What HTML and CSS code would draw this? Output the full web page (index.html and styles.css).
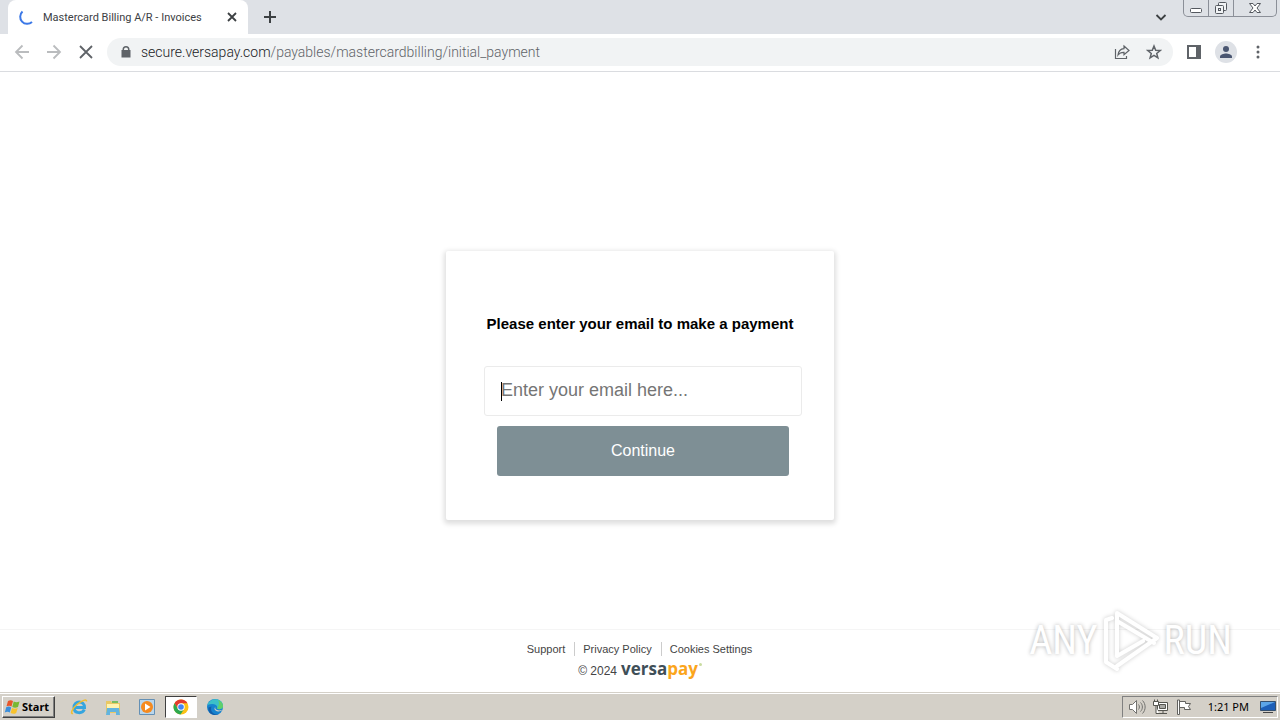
FILE: index.html
```html
<!DOCTYPE html>
<html lang="en">
<head>
    <meta charset="UTF-8">
    <meta name="viewport" content="width=device-width, initial-scale=1.0">
    <title>Mastercard Billing A/R - Invoices</title>
    <link rel="stylesheet" href="styles.css">
</head>
<body>
    <!-- Tab strip -->
    <header class="tab-strip">
        <div class="tab">
            <svg class="spinner" width="16" height="16" viewBox="0 0 16 16" fill="none" stroke="#3b78e7" stroke-width="2">
                <path d="M3.500 2.600A7 7 0 0 0 13 13"/>
            </svg>
            <span class="tab-title">Mastercard Billing A/R - Invoices</span>
            <button class="icon-button tab-close" aria-label="Close tab">
                <svg width="10" height="10" viewBox="0 0 10 10" fill="none" stroke="#3c4043" stroke-width="1.800">
                    <path d="M1 1l8 8M9 1L1 9"/>
                </svg>
            </button>
        </div>
        <button class="icon-button new-tab" aria-label="New tab">
            <svg width="12" height="12" viewBox="0 0 12 12" stroke="#3c4043" stroke-width="2">
                <path d="M6 0v12M0 6h12"/>
            </svg>
        </button>
        <button class="icon-button tab-search" aria-label="Search tabs">
            <svg width="12" height="12" viewBox="0 0 12 12" fill="none" stroke="#3c4043" stroke-width="1.800">
                <path d="M1.500 4L6 8.500 10.500 4"/>
            </svg>
        </button>
        <div class="window-controls">
            <button class="window-button" aria-label="Minimize">
                <svg width="14" height="12" viewBox="0 0 14 12" fill="#fff" stroke="#54585f">
                    <rect x="1.500" y="6.500" width="11" height="4" rx="1"/>
                </svg>
            </button>
            <button class="window-button" aria-label="Restore">
                <svg width="14" height="14" viewBox="0 0 14 14" fill="#f1f3f5" stroke="#54585f">
                    <rect x="4.500" y="1.500" width="8" height="8" rx="1"/>
                    <rect x="1.500" y="4.500" width="8" height="8" rx="1"/>
                    <rect x="4.500" y="7.500" width="2" height="2"/>
                </svg>
            </button>
            <button class="window-button window-close" aria-label="Close">
                <svg width="14" height="12" viewBox="0 0 14 12" fill="#fff" stroke="#54585f">
                    <path d="M1.500 1.500h3.500l2 2.500 2-2.500h3.500L9 6l3.500 4.500H9L7 8l-2 2.500H1.500L5 6z"/>
                </svg>
            </button>
        </div>
    </header>

    <!-- Toolbar -->
    <nav class="toolbar">
        <button class="icon-button" aria-label="Back">
            <svg width="16" height="16" viewBox="0 0 16 16" fill="none" stroke="#babcbe" stroke-width="1.800">
                <path d="M15 8H2M8.500 1.500L2 8l6.500 6.500"/>
            </svg>
        </button>
        <button class="icon-button" aria-label="Forward">
            <svg width="16" height="16" viewBox="0 0 16 16" fill="none" stroke="#babcbe" stroke-width="1.800">
                <path d="M1 8h13M7.500 1.500L14 8l-6.500 6.500"/>
            </svg>
        </button>
        <button class="icon-button" aria-label="Stop loading">
            <svg width="16" height="16" viewBox="0 0 16 16" fill="none" stroke="#5f6368" stroke-width="1.800">
                <path d="M2 2l12 12M14 2L2 14"/>
            </svg>
        </button>
        <div class="address-bar">
            <svg width="12" height="14" viewBox="0 0 12 14" fill="#5f6368">
                <path d="M9.500 5V4.500a3.500 3.500 0 0 0-7 0V5H1.500v7.500h9V5zM4 5V4.500a2 2 0 0 1 4 0V5z"/>
            </svg>
            <span class="url"><span class="host">secure.versapay.com</span>/payables/mastercardbilling/initial_payment</span>
            <button class="icon-button" aria-label="Share">
                <svg width="16" height="16" viewBox="0 0 16 16" fill="none" stroke="#5f6368" stroke-width="1.200">
                    <path d="M1.500 5v9.500h11V12M10 2l5 4.500-5 4.300V8.300C7.500 8.200 5.500 9 4 11c.4-3.500 2.500-6 6-6.300z"/>
                </svg>
            </button>
            <button class="icon-button" aria-label="Bookmark this tab">
                <svg width="16" height="16" viewBox="0 0 16 16" fill="none" stroke="#5f6368" stroke-width="1.500">
                    <path d="M8 2l1.700 4.200 4.500.3-3.500 2.900 1.200 4.400L8 11.400l-3.900 2.400 1.200-4.400-3.500-2.900 4.500-.3z"/>
                </svg>
            </button>
        </div>
        <button class="icon-button" aria-label="Side panel">
            <svg width="14" height="14" viewBox="0 0 14 14">
                <path fill="#5f6368" d="M0 0h14v14H0z"/>
                <path fill="#fff" d="M2 2h7v10H2z"/>
            </svg>
        </button>
        <button class="icon-button" aria-label="Profile">
            <svg width="22" height="22" viewBox="0 0 22 22">
                <circle cx="11" cy="11" r="11" fill="#dee1e6"/>
                <circle cx="11" cy="8" r="3" fill="#4a5671"/>
                <path fill="#4a5671" d="M5 17v-1.500c0-2 4-3 6-3s6 1 6 3V17z"/>
            </svg>
        </button>
        <button class="icon-button" aria-label="Menu">
            <svg width="16" height="16" viewBox="0 0 16 16" fill="#5f6368">
                <circle cx="8" cy="3" r="1.500"/>
                <circle cx="8" cy="8" r="1.500"/>
                <circle cx="8" cy="13" r="1.500"/>
            </svg>
        </button>
    </nav>

    <!-- Payment page -->
    <div class="page">
        <main class="content">
            <form class="card">
                <label class="card-title" for="email">Please enter your email to make a payment</label>
                <div class="email-field">
                    <input class="email-input" id="email" type="email" placeholder="Enter your email here..." autofocus>
                </div>
                <button class="continue-button" type="button">Continue</button>
            </form>
        </main>
        <footer class="footer">
            <div class="footer-links">
                <a href="#support">Support</a>
                <a href="#privacy">Privacy Policy</a>
                <a href="#cookies">Cookies Settings</a>
            </div>
            <div class="copyright">
                <span>© 2024</span>
                <span class="brand">versa<span class="brand-pay">pay</span></span>
                <svg class="brand-mark" width="3" height="3" viewBox="0 0 3 3">
                    <circle cx="1.500" cy="1.500" r="1.500" fill="#c8dca0"/>
                </svg>
            </div>
        </footer>
        <div class="watermark">
            <span>ANY</span>
            <svg width="58" height="64" viewBox="0 0 58 64" fill="none" stroke="#fff" stroke-width="4" stroke-linejoin="round" stroke-linecap="round">
                <path d="M10 9L4 11v42l11 7"/>
                <path d="M15 47V4l40 25-40 28M15 12l37 22M15 47l26-15"/>
            </svg>
            <span>RUN</span>
        </div>
    </div>

    <!-- Taskbar -->
    <footer class="taskbar">
        <button class="start-button">
            <svg width="17" height="16" viewBox="0 0 17 16">
                <path fill="#e8562a" d="M4 2c2-1.200 3.500-1 5 0L7.500 7.500C6 6.500 4.500 6.500 2.500 7.300z"/>
                <path fill="#78b833" d="M9.700 2.500c2 1 3.500 1 5.800 0L14 8c-2 1-3.800 1-5.700 0z"/>
                <path fill="#3b8edb" d="M2.200 8.200c2-1 3.500-.8 5 .2l-1.400 5c-1.500-1-3.300-1-5 0z"/>
                <path fill="#f8c22b" d="M8 9c2 1 3.700 1 5.700 0l-1.500 5c-2 1.200-3.700 1-5.600 0z"/>
            </svg>
            Start
        </button>
        <div class="quick-launch">
            <button class="task-button" aria-label="Internet Explorer">
                <svg width="18" height="18" viewBox="0 0 18 18" fill="none">
                    <path stroke="#35a5df" stroke-width="3" d="M4 9.500h10.500C14.500 2 4 2 4 9.500c0 6.500 8.500 6.500 10.300 2"/>
                    <path stroke="#f0bd2f" stroke-width="1.500" d="M3 15.500c-3 1-1-5 4-9s10-6 9.500-3"/>
                </svg>
            </button>
            <button class="task-button" aria-label="Explorer">
                <svg width="18" height="18" viewBox="0 0 18 18">
                    <path fill="#e9c864" d="M2 3h5l1 2h8v10H2z"/>
                    <path fill="#fff3b0" d="M3 6h12v6H3z"/>
                    <path fill="#79bd62" d="M8 3h6v2H8z"/>
                    <path fill="#62b4df" d="M3 10h12l1 7h-4v-3H6v3H2z"/>
                </svg>
            </button>
            <button class="task-button" aria-label="Media Player">
                <svg width="18" height="18" viewBox="0 0 18 18">
                    <path fill="#b9d6ec" stroke="#6490b5" d="M1.500 1.500h15v15h-15z"/>
                    <circle cx="9" cy="9" r="6" fill="#f58a1f"/>
                    <path fill="#fff" d="M7 5.500v7L12.500 9z"/>
                </svg>
            </button>
            <button class="task-button active" aria-label="Chrome">
                <svg width="16" height="16" viewBox="0 0 16 16">
                    <circle cx="8" cy="8" r="7.500" fill="#fbc116"/>
                    <path fill="#e33b2e" d="M1.500 4.200a7.500 7.500 0 0 1 13 0H8L5 10z"/>
                    <path fill="#2da94f" d="M1.500 4.200L5 10l5.500 1-3 4.500A7.500 7.500 0 0 1 1.500 4.200z"/>
                    <circle cx="8" cy="8" r="3.700" fill="#fff"/>
                    <circle cx="8" cy="8" r="2.800" fill="#4285f4"/>
                </svg>
            </button>
            <button class="task-button" aria-label="Edge">
                <svg width="18" height="18" viewBox="0 0 18 18">
                    <circle cx="9" cy="9" r="8" fill="#1683cf"/>
                    <path fill="#3cc0c8" d="M1.500 7C4-1 17-.5 17 8c0 3-4 4-6 2.500 1.500-4-4-6-9.500-3.500z"/>
                    <path fill="#5fcf6c" d="M12 2c4 1.500 5.500 5 5 7-.8 2-4 2.800-6 1.500 1.500-2 3-5 1-8.500z"/>
                    <path fill="#135da8" d="M5.500 8.500c-2 5 3 9.500 8 7.300-5 3-12 .2-11-6.300z"/>
                    <path fill="#d4d0c8" d="M9.500 8.500c-1.500 3 2.500 5 6.700 3.300-1.500 2.400-8 2.300-7.700-1.500z"/>
                </svg>
            </button>
        </div>
        <div class="tray">
            <svg width="18" height="16" viewBox="0 0 18 16" fill="none" stroke="#72726f">
                <path fill="#fff" d="M1.500 5.500h3l4-4v13l-4-4h-3z"/>
                <path d="M10.500 5.500c1.200 1.500 1.200 3.500 0 5M12.500 3.500c2.500 2.500 2.500 6.500 0 9M14.500 1.500c3.500 3.500 3.500 9.500 0 13"/>
            </svg>
            <svg width="18" height="16" viewBox="0 0 18 16" fill="#fff" stroke="#55554f">
                <path d="M5.500 3.500h10v8h-10zM7 14.500h8M11 11.500v3"/>
                <path fill="#a9a9a5" d="M7.500 5.500h6v4h-6z"/>
                <path d="M1.500 2.500h5v4h-5zM2.500 2V.5M5.500 2V.5M4 7v7.500h3"/>
            </svg>
            <svg width="16" height="16" viewBox="0 0 16 16" fill="#fff" stroke="#62625f">
                <path d="M1.500 1v14.500h2V1zM3.500 2.500h6v2h5l-2 3 2 3h-6v-2h-5z"/>
            </svg>
            <time class="clock">1:21 PM</time>
            <svg width="16" height="14" viewBox="0 0 16 14">
                <path fill="#1d5fb8" stroke="#35506f" d="M.5 1.500h15v9H.5z"/>
                <path fill="#5ca5e8" d="M1 2h14L1 8z"/>
                <path fill="#444" d="M3 12h10v1H3z"/>
            </svg>
        </div>
    </footer>
</body>
</html>
```
FILE: styles.css
```css
* {
    margin: 0;
    padding: 0;
    box-sizing: border-box;
}

body {
    min-height: 100vh;
    display: flex;
    flex-direction: column;
    background-color: #fff;
    font-family: "Liberation Sans", Arial, sans-serif;
}

button {
    border: none;
    background: none;
    font-family: inherit;
}

svg {
    display: block;
    flex-shrink: 0;
}

.icon-button {
    display: flex;
    align-items: center;
    justify-content: center;
    flex-shrink: 0;
}

/* Tab strip */
.tab-strip {
    height: 34px;
    display: flex;
    align-items: center;
    padding: 0 3px 0 8px;
    background-color: #dee1e6;
}

.tab {
    width: 240px;
    height: 34px;
    display: flex;
    align-items: center;
    padding: 0 11px;
    background-color: #fff;
    border-radius: 8px 8px 0 0;
}

.tab-title {
    flex: 1;
    margin-left: 8px;
    font-family: Roboto, sans-serif;
    font-size: 11px;
    color: #3c4043;
    white-space: nowrap;
}

.new-tab {
    margin-left: 16px;
}

.tab-search {
    margin-left: auto;
    margin-right: 16px;
}

.window-controls {
    display: flex;
    align-self: flex-start;
    border: 1px solid #8b8f98;
    border-top: none;
    border-radius: 0 0 5px 5px;
}

.window-button {
    width: 25px;
    height: 16px;
    display: flex;
    align-items: center;
    justify-content: center;
    border-right: 1px solid #8b8f98;
}

.window-close {
    width: 42px;
    border-right: none;
}

/* Toolbar */
.toolbar {
    height: 38px;
    display: flex;
    align-items: center;
    gap: 10px;
    padding: 0 11px 1px;
    border-bottom: 1px solid #dadce0;
}

.toolbar > .icon-button {
    width: 22px;
}

.address-bar {
    flex: 1;
    height: 28px;
    display: flex;
    align-items: center;
    gap: 16px;
    padding: 0 11px 0 13px;
    background-color: #f1f3f4;
    border-radius: 14px;
}

.url {
    flex: 1;
    margin-left: -7px;
    font-family: Roboto, sans-serif;
    font-size: 14px;
    font-weight: 300;
    color: #5f6368;
    white-space: nowrap;
}

.host {
    color: #202124;
}

/* Payment page */
.page {
    flex: 1;
    display: flex;
    flex-direction: column;
    position: relative;
}

.content {
    flex: 1;
    display: flex;
    justify-content: center;
    align-items: flex-end;
    padding: 32px 0 109px;
}

.card {
    width: 388px;
    display: flex;
    flex-direction: column;
    padding: 63px 32px 44px;
    border-radius: 2px;
    box-shadow: 0 2px 5px 2px rgba(0, 0, 0, 0.13);
}

.card-title {
    margin-bottom: 33px;
    font-size: 15px;
    font-weight: 700;
    line-height: 19px;
    color: #000;
    text-align: center;
}

.email-field {
    position: relative;
    margin-left: 6px;
}

/* Text cursor */
.email-field::before {
    content: "";
    position: absolute;
    top: 16px;
    left: 17px;
    width: 1px;
    height: 19px;
    background-color: #000;
}

.email-input {
    display: block;
    width: 100%;
    height: 50px;
    padding: 0 16px 2px;
    border: 1px solid #ebebeb;
    border-radius: 3px;
    outline: none;
    font-family: inherit;
    font-size: 18px;
    color: #000;
    caret-color: transparent;
}

.email-input::placeholder {
    color: #757575;
}

.continue-button {
    height: 50px;
    margin: 10px 13px 0 19px;
    border-radius: 3px;
    background-color: #7e8f95;
    font-size: 16px;
    color: #fff;
}

/* Footer */
.footer {
    height: 63px;
    padding-top: 12px;
    border-top: 1px solid #f5f5f5;
    font-size: 11px;
    color: #444;
}

.footer-links {
    display: flex;
    justify-content: center;
    line-height: 14px;
}

.footer-links a {
    padding: 0 9px 0 8px;
    color: inherit;
    text-decoration: none;
}

.footer-links a + a {
    border-left: 1px solid #ccc;
}

.copyright {
    display: flex;
    justify-content: center;
    align-items: baseline;
    gap: 4px;
    font-size: 12px;
    line-height: 26px;
}

.brand {
    font-family: "Open Sans", sans-serif;
    font-size: 17px;
    font-weight: 700;
    color: #3f4f58;
}

.brand-pay {
    color: #fba51c;
}

.brand-mark {
    align-self: flex-start;
    margin: 7px 0 0 -3px;
}

.watermark {
    position: absolute;
    right: 48px;
    bottom: 19px;
    display: flex;
    align-items: center;
    gap: 4px;
    font-family: "Roboto Condensed", "Open Sans", sans-serif;
    font-size: 40px;
    line-height: 64px;
    color: #fff;
    text-shadow: 0 0 4px rgba(0, 0, 0, 0.3);
    pointer-events: none;
}

.watermark svg {
    filter: drop-shadow(0 0 2px rgba(0, 0, 0, 0.2));
}

/* Taskbar */
.taskbar {
    height: 28px;
    display: flex;
    align-items: center;
    padding: 2px;
    background-color: #d4d0c8;
    border-top: 1px solid #d4d0c8;
    box-shadow: inset 0 1px #fff;
    font-family: "Noto Sans", sans-serif;
    font-size: 11px;
}

.start-button {
    width: 53px;
    height: 22px;
    display: flex;
    align-items: center;
    gap: 1px;
    padding-left: 1px;
    border: 1px solid;
    border-color: #fff #404040 #404040 #fff;
    box-shadow: inset -1px -1px #808080;
    font-size: 11px;
    font-weight: 700;
}

.quick-launch {
    display: flex;
    gap: 2px;
    margin-left: 8px;
}

.task-button {
    width: 32px;
    height: 22px;
    display: flex;
    align-items: center;
    justify-content: center;
}

.task-button.active {
    background-color: #fff;
    border: 1px solid;
    border-color: #404040 #fff #fff #404040;
}

.tray {
    height: 22px;
    display: flex;
    align-items: center;
    gap: 6px;
    margin-left: auto;
    padding: 0 1px 0 5px;
    border: 1px solid;
    border-color: #808080 #fff #fff #808080;
}

.clock {
    margin: 0 5px 0 10px;
}
```
